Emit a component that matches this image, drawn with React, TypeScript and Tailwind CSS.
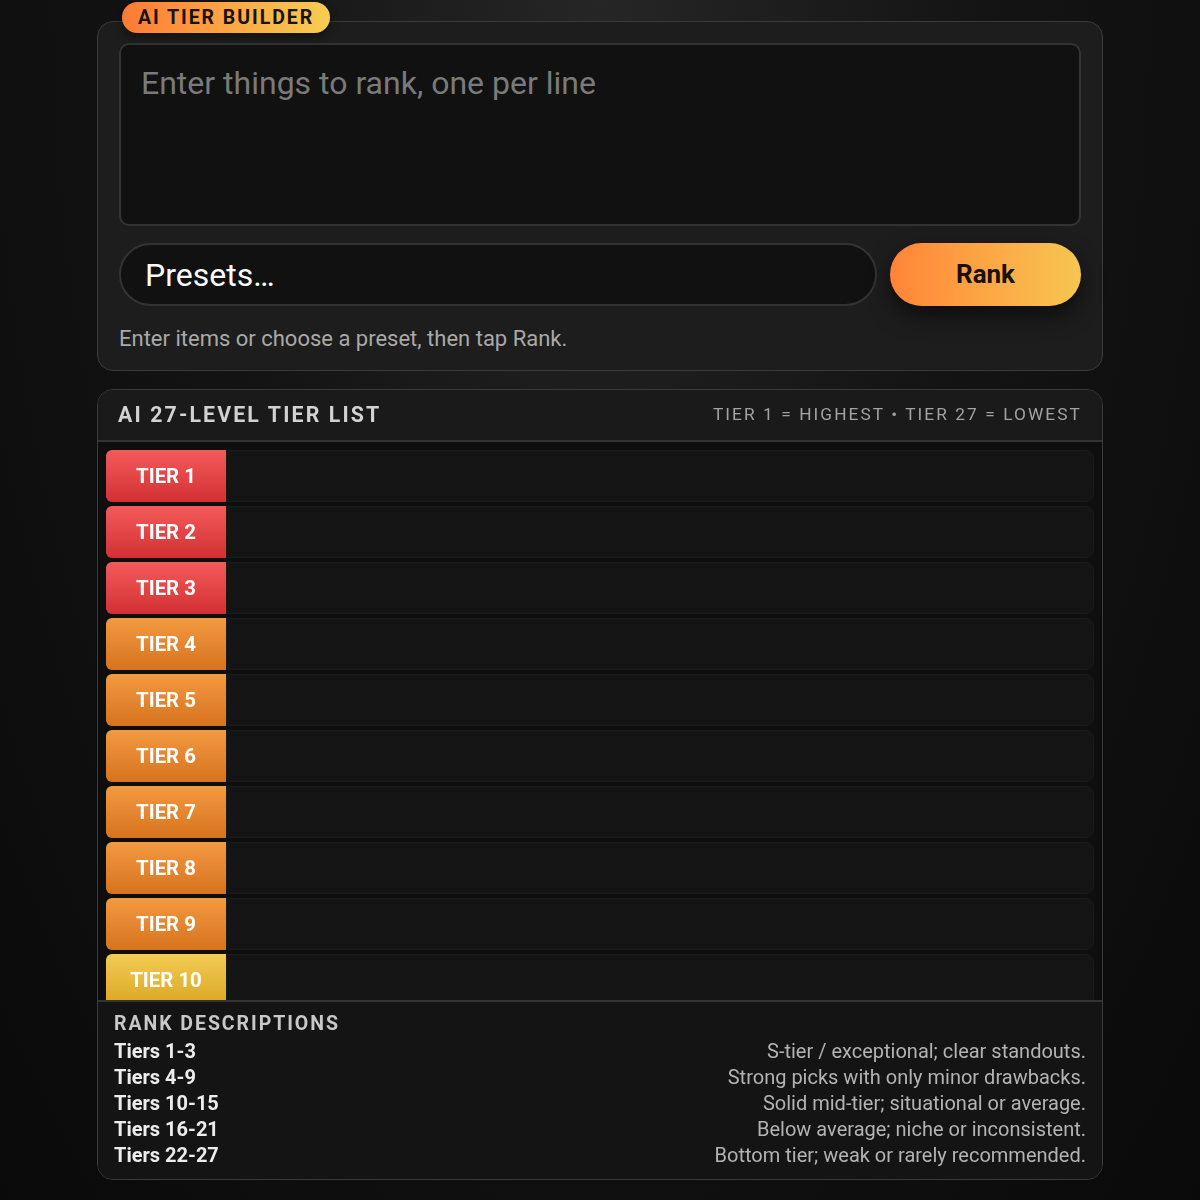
import { useState } from 'react'

type Tier = { n: number; tone: 'red' | 'orange' | 'yellow' | 'green' | 'blue' }

const tiers: Tier[] = Array.from({ length: 27 }, (_, i) => {
  const n = i + 1
  const tone = n <= 3 ? 'red' : n <= 9 ? 'orange' : n <= 15 ? 'yellow' : n <= 21 ? 'green' : 'blue'
  return { n, tone }
})

const toneClass: Record<Tier['tone'], string> = {
  red: 'bg-gradient-to-b from-[#f45a5a] to-[#d32f34]',
  orange: 'bg-gradient-to-b from-[#f29a40] to-[#d8731d]',
  yellow: 'bg-gradient-to-b from-[#f4cb52] to-[#d9a622]',
  green: 'bg-gradient-to-b from-[#7bd06a] to-[#43a33a]',
  blue: 'bg-gradient-to-b from-[#5aa5f4] to-[#2f6fd3]',
}

const descriptions = [
  ['Tiers 1-3', 'S-tier / exceptional; clear standouts.'],
  ['Tiers 4-9', 'Strong picks with only minor drawbacks.'],
  ['Tiers 10-15', 'Solid mid-tier; situational or average.'],
  ['Tiers 16-21', 'Below average; niche or inconsistent.'],
  ['Tiers 22-27', 'Bottom tier; weak or rarely recommended.'],
]

export default function App() {
  const [items, setItems] = useState('')
  const [preset, setPreset] = useState('')

  return (
    <div className="min-h-[1200px] bg-[radial-gradient(ellipse_at_top,#262626_0%,#141414_45%,#0a0a0a_100%)] font-['Roboto',sans-serif] pt-[21px]">
      <div className="w-[1006px] mx-auto flex flex-col gap-[18px]">
        {/* input card */}
        <div className="relative rounded-[16px] border border-[#3a3a3a] bg-[#1d1d1d] px-[21px] pt-[21px] pb-[17px]">
          <span className="absolute -top-[20px] left-[24px] h-[31px] px-[16px] rounded-full bg-gradient-to-r from-[#ff7a35] to-[#f6cd52] flex items-center text-[19.5px] font-bold tracking-[0.1em] text-[#1a1208] shadow-[0_4px_10px_rgba(0,0,0,0.4)]">
            AI TIER BUILDER
          </span>
          <textarea
            value={items}
            onChange={(e) => setItems(e.target.value)}
            placeholder="Enter things to rank, one per line"
            className="block w-full h-[183px] resize-none rounded-[10px] border-2 border-[#333] bg-[#111111] px-[20px] pt-[18px] pb-[18px] text-[32px] leading-[40px] text-white placeholder:text-[#7a7a7a] outline-none"
          />
          <div className="mt-[17px] flex gap-[13px]">
            <div className="flex-1 h-[63px] rounded-full border-2 border-[#333] bg-[#111111] flex items-center px-[24px]">
              <select
                value={preset}
                onChange={(e) => setPreset(e.target.value)}
                className="w-full appearance-none bg-transparent text-[32px] text-white outline-none"
              >
                <option value="">Presets…</option>
                <option value="games">Video games</option>
                <option value="foods">Fast food</option>
              </select>
            </div>
            <button className="w-[191px] h-[63px] rounded-full bg-gradient-to-r from-[#ff8437] to-[#f6c651] text-[26px] font-bold text-[#17110a] shadow-[0_10px_22px_rgba(0,0,0,0.55)]">
              Rank
            </button>
          </div>
          <p className="mt-[19px] text-[22px] leading-[28px] text-[#a9a9a9]">
            Enter items or choose a preset, then tap Rank.
          </p>
        </div>

        {/* tier list card */}
        <div className="rounded-[16px] border border-[#3a3a3a] bg-[#121212] overflow-hidden mb-[20px]">
          <div className="h-[52px] flex items-center justify-between px-[20px] bg-[#1a1a1a] border-b-2 border-[#333]">
            <h2 className="text-[21.3px] font-bold tracking-[0.1em] text-[#d2d2d2]">AI 27-LEVEL TIER LIST</h2>
            <span className="text-[17.3px] tracking-[0.12em] text-[#a3a3a3]">TIER 1 = HIGHEST • TIER 27 = LOWEST</span>
          </div>
          <div className="h-[558px] overflow-y-auto [scrollbar-width:none] bg-[#0e0e0e] px-[8px] pt-[8px] flex flex-col gap-[4px]">
            {tiers.map((t) => (
              <div key={t.n} className="flex h-[52px] shrink-0">
                <div
                  className={`${toneClass[t.tone]} w-[120px] shrink-0 rounded-l-[6px] flex items-center justify-center pt-[1px] text-[20.4px] font-bold text-white`}
                >
                  TIER {t.n}
                </div>
                <div className="flex-1 rounded-r-[8px] bg-[#151515] border border-[#1b1b1b]" />
              </div>
            ))}
          </div>
          <div className="border-t-2 border-[#333] bg-[#141414] px-[16px] pt-[8px] pb-[11px]">
            <h3 className="text-[19.5px] leading-[28px] font-bold tracking-[0.1em] text-[#c8c8c8]">RANK DESCRIPTIONS</h3>
            <div className="flex flex-col">
              {descriptions.map(([range, text]) => (
                <div key={range} className="flex justify-between text-[20px] leading-[26px]">
                  <span className="font-bold text-[#ececec]">{range}</span>
                  <span className="text-[#b3b3b3]">{text}</span>
                </div>
              ))}
            </div>
          </div>
        </div>
      </div>
    </div>
  )
}
